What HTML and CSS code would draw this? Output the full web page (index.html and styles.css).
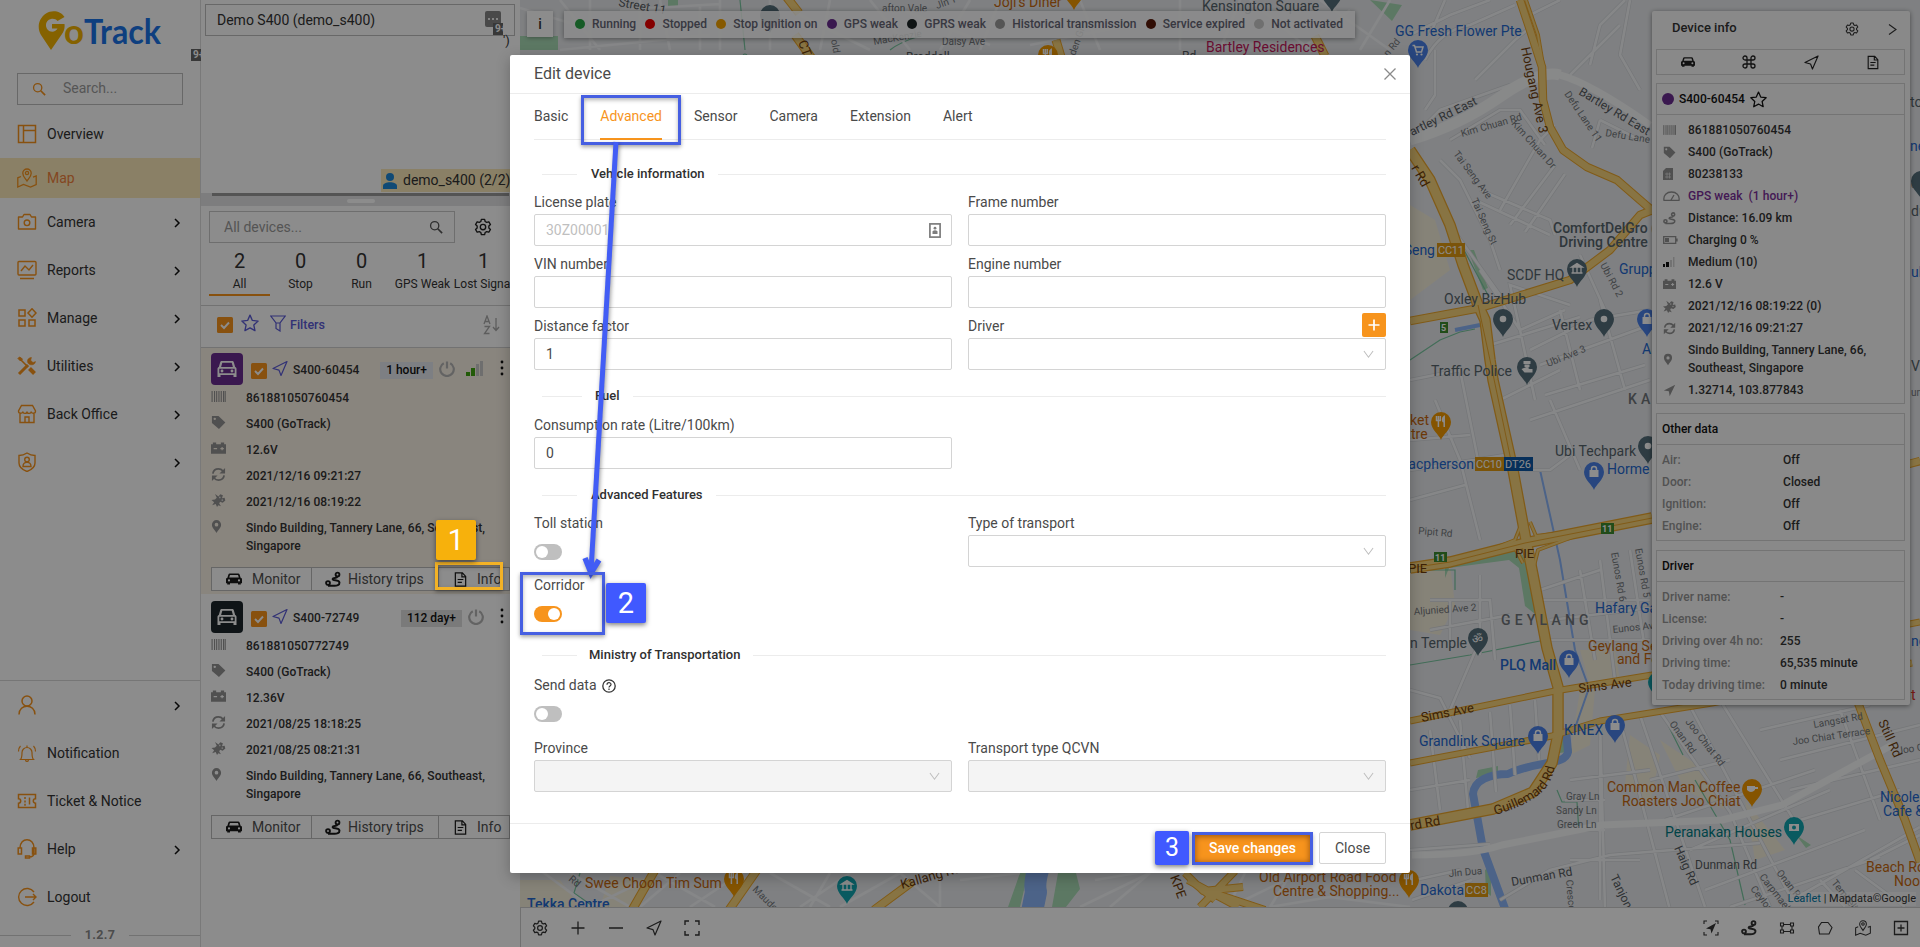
FILE: index.html
```html
<!DOCTYPE html>
<html lang="en">
<head>
<meta charset="utf-8">
<title>GoTrack</title>
<link rel="stylesheet" href="styles.css">
</head>
<body>
<svg width="0" height="0" class="defs" aria-hidden="true">
  <defs>
    <symbol id="chev" viewBox="0 0 12 12"><path d="M4 2 8 6 4 10" fill="none" stroke="currentColor" stroke-width="1.500"/></symbol>
    <symbol id="down" viewBox="0 0 12 12"><path d="M1 2.200 6 9 11 2.200" fill="none" stroke="currentColor" stroke-width="1.100"/></symbol>
    <symbol id="gear" viewBox="0 0 20 20"><g fill="none" stroke="currentColor" stroke-width="1.500" stroke-linejoin="round"><path d="M8.200 1.500h3.600l.6 2.400 1.700 1 2.400-.7 1.800 3.100-1.800 1.700v2l1.800 1.700-1.800 3.100-2.400-.7-1.700 1-.6 2.400H8.200l-.6-2.400-1.700-1-2.400.7-1.800-3.100L3.500 11V9L1.700 7.300l1.800-3.100 2.400.7 1.700-1z"/><circle cx="10" cy="10" r="3"/></g></symbol>
    <symbol id="nav" viewBox="0 0 16 16"><path d="M15 1 1 8l6 1.600L9 15z" fill="none" stroke="currentColor" stroke-width="1.200" stroke-linejoin="round"/></symbol>
    <symbol id="navfill" viewBox="0 0 16 16"><path d="M15 1 1 8l6.200 1L8.200 15z" fill="currentColor"/></symbol>
    <symbol id="car" viewBox="0 0 16 16"><path fill="currentColor" fill-rule="evenodd" d="M3.800 2.500h8.400c.7 0 1.200.4 1.400 1l1 3.300c.9.2 1.400.8 1.400 1.600v3.800h-1.200v1.300H12v-1.300H4v1.300H1.200v-1.300H0V8.400c0-.8.5-1.400 1.400-1.600l1-3.300c.2-.6.700-1 1.400-1zM4 4 3.200 6.600h9.600L12 4zM3 8.300a1.100 1.100 0 1 0 0 2.200 1.100 1.100 0 0 0 0-2.200zm10 0a1.100 1.100 0 1 0 0 2.200 1.100 1.100 0 0 0 0-2.200z"/></symbol>
    <symbol id="carline" viewBox="0 0 20 20"><path fill="currentColor" fill-rule="evenodd" d="M4.800 2h10.400c.8 0 1.400.5 1.600 1.200L18.200 8c.8.3 1.300 1 1.300 1.800V18h-3v-2h-13v2h-3V9.800c0-.8.5-1.500 1.300-1.800l1.400-4.800C3.400 2.500 4 2 4.800 2zm.5 1.800L4.100 8h11.800l-1.200-4.200zM2.300 9.800v4.400h15.400V9.800zM5 10.500a1.400 1.400 0 1 1 0 2.900 1.400 1.400 0 0 1 0-2.900zm10 0a1.400 1.400 0 1 1 0 2.900 1.400 1.400 0 0 1 0-2.900z"/></symbol>
    <symbol id="route" viewBox="0 0 16 16"><g fill="none" stroke="currentColor" stroke-width="1.900"><circle cx="3" cy="11.500" r="1.900"/><circle cx="12.500" cy="3" r="1.900"/><path d="M12.500 5C12 7.500 8 5.500 7.600 7.500 7.300 9.500 14 8 14.500 11c.3 2.500-3 3.200-5 3.200H3"/></g></symbol>
    <symbol id="doc" viewBox="0 0 16 16"><path d="M2.500 1h7.500l3.500 3.700V15h-11zM9.500 1v4.200h4M5 8h6M5 11h4.500" fill="none" stroke="currentColor" stroke-width="1.300"/></symbol>
    <symbol id="star" viewBox="0 0 16 16"><path d="m8 1 2.100 4.700 5.100.6-3.800 3.500 1 5L8 12.300l-4.500 2.500 1-5L.8 6.300l5.100-.6z" fill="none" stroke="currentColor" stroke-width="1.200" stroke-linejoin="round"/></symbol>
    <symbol id="check" viewBox="0 0 16 16"><rect width="16" height="16" rx="1.500" fill="#f7941d"/><path d="m4 8 3 3 5-5.500" fill="none" stroke="#fff" stroke-width="1.900"/></symbol>
    <symbol id="barcode" viewBox="0 0 16 12"><path d="M1 0v12M3.700 0v12M6 0v12M8.500 0v12M11 0v12M13.500 0v12M15.300 0v12" stroke="currentColor" stroke-width="1.200"/></symbol>
    <symbol id="tag" viewBox="0 0 16 16"><path fill="currentColor" fill-rule="evenodd" d="M1 1h7l7.300 7-6.800 7L1 8.500zm3 1.800a1.300 1.300 0 1 0 0 2.600 1.300 1.300 0 0 0 0-2.600z"/></symbol>
    <symbol id="batt" viewBox="0 0 16 12"><path fill="currentColor" fill-rule="evenodd" d="M2 0h3.500v2h5V0H14v2h2v10H0V2h2zm.8 6v1.300h3.700V6zm8.400-1.200V6H10v1.300h1.200v1.200h1.300V7.300h1.200V6h-1.200V4.800z"/></symbol>
    <symbol id="sync" viewBox="0 0 16 16"><path d="M2 7c.5-3 3-5 6-5 2 0 3.600.9 4.800 2.300M14 9c-.5 3-3 5-6 5-2 0-3.600-.9-4.800-2.300" fill="none" stroke="currentColor" stroke-width="1.900"/><path d="M15 1v6H9zM1 15V9h6z" fill="currentColor"/></symbol>
    <symbol id="sat" viewBox="0 0 16 16"><path fill="currentColor" d="m4 1 4 3 2-2.500 3 1L12 6l3-.5.8 3-3 2.500-3-1-1 2 2 3-3-1-1.500 2-1.500-3.500-4 1.500L3 10.500 0 8l4-.500 2-2z"/><circle cx="9.500" cy="5" r="1" fill="#ddd"/><circle cx="12.300" cy="8" r="1" fill="#ddd"/></symbol>
    <symbol id="place" viewBox="0 0 12 16"><path fill="currentColor" fill-rule="evenodd" d="M6 1a5 5 0 0 1 5 5c0 3.500-3.500 6-5 9C4.500 12 1 9.500 1 6a5 5 0 0 1 5-5zm0 3a2 2 0 1 0 0 4 2 2 0 0 0 0-4z"/></symbol>
    <symbol id="power" viewBox="0 0 16 16"><path d="M4.800 2.200a6.800 6.800 0 1 0 6.400 0M8 .5v7" fill="none" stroke="currentColor" stroke-width="2.200"/></symbol>
    <symbol id="mapicon" viewBox="0 0 20 20"><g fill="none" stroke="currentColor" stroke-width="1.300"><path d="M10 13C8.500 10.500 5.800 8.500 5.800 5.200a4.200 4.200 0 0 1 8.400 0C14.200 8.500 11.500 10.500 10 13z"/><circle cx="10" cy="5" r="1.600"/><path d="M4 8.500 .8 9.800V19l5.700-2.500 7 2.500 5.700-2.500V8l-3.200 1.200"/></g></symbol>
    <symbol id="search" viewBox="0 0 16 16"><g fill="none" stroke="currentColor"><circle cx="6.500" cy="6.500" r="4.700" stroke-width="1.500"/><path d="m10 10 5 5" stroke-width="1.900"/></g></symbol>
    <symbol id="pin" viewBox="-10 -28 20 28" overflow="visible"><path d="M0 0C-1.500-5-10-10.500-10-18A10 10 0 0 1 10-18C10-10.500 1.500-5 0 0z" fill="currentColor"/></symbol>
    <symbol id="g-dot" viewBox="-10 -28 20 28"><circle cy="-18" r="3.300" fill="#fff"/></symbol>
    <symbol id="g-bag" viewBox="-10 -28 20 28"><rect x="-4.500" y="-20" width="9" height="7" fill="#fff"/><path d="M-2.500-19v-2a2.500 2.500 0 0 1 5 0v2" fill="none" stroke="#fff" stroke-width="1.500"/></symbol>
    <symbol id="g-food" viewBox="-10 -28 20 28"><path d="M-4.500-24v4.500h3.800V-24M-2.600-24v11M3.200-13v-10.500c-2 1-2.300 5.500 0 5.500" fill="none" stroke="#fff" stroke-width="1.500"/></symbol>
    <symbol id="g-bank" viewBox="-10 -28 20 28"><path d="M-5.500-20 0-23.500 5.500-20zM-4-19.500v5M0-19.500v5M4-19.500v5M-5.500-14h11" fill="#fff" stroke="#fff" stroke-width="1.300"/></symbol>
    <symbol id="g-badge" viewBox="-10 -28 20 28"><path d="M-3.500-24h7v3h-7zM-2.500-20.500h5v2.500q-2.500 2-5 0zM-5.500-16q5.500-2.500 8 0l3 0v3.500h-8z" fill="#fff"/></symbol>
    <symbol id="g-cart" viewBox="-10 -28 20 28"><path d="M-5.500-22.500h2l2 6.500h5l1.500-5h-8" fill="none" stroke="#fff" stroke-width="1.500"/><circle cx="-1" cy="-13.500" r="1.100" fill="#fff"/><circle cx="3.500" cy="-13.500" r="1.100" fill="#fff"/></symbol>
  </defs>
</svg>

<div class="app">
  <aside class="side">
    <svg class="logo" viewBox="0 0 130 44" width="130" height="44">
      <path d="M26.500 7C23 1 14-.5 8 3.500 0 9-1 18 3 25l10 15 11-16c2-3 3-6 2.500-10H14v4.500h5.500c-1.500 3.500-7 4.500-10 1-3-4-1.500-9.500 3.500-10.500 2.500-.5 5 0 6.500 2z" fill="#f3b300"/>
      <text x="26" y="34" class="logo-o" textLength="20" lengthAdjust="spacingAndGlyphs">o</text>
      <text x="46" y="34" class="logo-t" textLength="77" lengthAdjust="spacingAndGlyphs">Track</text>
    </svg>
    <span class="nine side-nine">9+</span>
    <div class="search"><svg width="14" height="14"><use href="#search"/></svg><span>Search...</span></div>
    <nav class="menu">
      <a class="mi"><svg class="ic" viewBox="0 0 20 20"><path d="M1.500 1.500h17v17h-17zM6.500 1.500v17M6.500 6.500h12" fill="none" stroke="currentColor" stroke-width="1.500"/></svg>Overview</a>
      <a class="mi active"><svg class="ic"><use href="#mapicon"/></svg>Map</a>
      <a class="mi"><svg class="ic" viewBox="0 0 20 20"><g fill="none" stroke="currentColor" stroke-width="1.400"><path d="M1.500 5h4L7 2.500h6L14.500 5h4v12h-17z" stroke-linejoin="round"/><circle cx="10" cy="10.800" r="2.800"/></g></svg>Camera<svg class="chev"><use href="#chev"/></svg></a>
      <a class="mi"><svg class="ic" viewBox="0 0 20 20"><g fill="none" stroke="currentColor" stroke-width="1.400"><rect x="1" y="1.500" width="18" height="13.500" rx="1"/><path d="M4 11 8 6l4 4 4-5M3 18.500h14"/></g></svg>Reports<svg class="chev"><use href="#chev"/></svg></a>
      <a class="mi"><svg class="ic" viewBox="0 0 20 20"><g fill="none" stroke="currentColor" stroke-width="1.500"><rect x="2" y="2" width="6" height="6"/><rect x="2" y="12" width="6" height="6"/><rect x="12" y="12" width="6" height="6"/><path d="m15 .8 4 4.200-4 4.200L11 5z"/></g></svg>Manage<svg class="chev"><use href="#chev"/></svg></a>
      <a class="mi"><svg class="ic" viewBox="0 0 20 20"><g fill="none" stroke="currentColor"><path d="m2 18 9-9" stroke-width="3"/><path d="m2 2 9 9" stroke-width="1.600"/><path d="m12.500 12.500 5 5" stroke-width="4"/><path d="M18.500 5.500 16 6.500l-2.300-2.200.8-2.800c-3 0-4.700 2.500-3.800 5 1.500 3.500 7.500 3 7.800-1z" fill="currentColor" stroke-width=".5"/><path d="M1 2.500 2.500 1l3 2-2 2z" fill="currentColor"/></g></svg>Utilities<svg class="chev"><use href="#chev"/></svg></a>
      <a class="mi"><svg class="ic" viewBox="0 0 20 20"><g fill="none" stroke="currentColor" stroke-width="1.400"><path d="M4.500 1.500h11L18.500 7c0 3-4 3-4.300.5C14 10 10 10 10 7.500 10 10 6 10 5.800 7.500 5.500 10 1.500 10 1.500 7zM3 10v8.500h14V10M8 18v-5h4v5"/></g></svg>Back Office<svg class="chev"><use href="#chev"/></svg></a>
      <a class="mi"><svg class="ic" viewBox="0 0 20 20"><g fill="none" stroke="currentColor" stroke-width="1.400"><path d="M10 1c3 2 5.500 2.500 8 2.500V11c0 4-4 7-8 8.500C6 18 2 15 2 11V3.500C4.500 3.500 7 3 10 1z"/><circle cx="10" cy="7.500" r="2.300"/><path d="M6 14.500c0-5.500 8-5.500 8 0z"/></g></svg><svg class="chev"><use href="#chev"/></svg></a>
    </nav>
    <nav class="menu foot">
      <a class="mi"><svg class="ic" viewBox="0 0 20 20"><g fill="none" stroke="currentColor" stroke-width="1.500"><circle cx="10" cy="6" r="5"/><path d="M2 19.500c0-11 16-11 16 0"/></g></svg><svg class="chev"><use href="#chev"/></svg></a>
      <a class="mi"><svg class="ic" viewBox="0 0 20 20"><g fill="none" stroke="currentColor" stroke-width="1.200"><path d="M3.500 16.500c1.500-1.500 1.500-3 1.500-7a5 5 0 0 1 10 0c0 4 0 5.500 1.500 7zM10 4.500v-2M8.500 17c.5 2 2.500 2 3 0M3.500 3C2 4.500 1.500 6 1.500 8.500M16.500 3c1.500 1.500 2 3 2 5.500"/></g></svg>Notification</a>
      <a class="mi"><svg class="ic" viewBox="0 0 20 20"><g fill="none" stroke="currentColor" stroke-width="1.500"><path d="M1.500 3.500h17v4.300a2.200 2.200 0 0 0 0 4.400v4.300h-17v-4.300a2.200 2.200 0 0 0 0-4.400z"/><path d="M8 6v9" stroke-dasharray="2 1.400"/><path d="M12.500 6.500v7"/></g></svg>Ticket &amp; Notice</a>
      <a class="mi"><svg class="ic" viewBox="0 0 20 20"><g fill="none" stroke="currentColor" stroke-width="1.500"><path d="M3 9c0-11 14-11 14 0v5c0 2.500-2 4-5 4M1.200 9H4.500v6H1.200zM15.500 9h3.300v6h-3.300zM8.500 17h4v2h-4z"/></g></svg>Help<svg class="chev"><use href="#chev"/></svg></a>
      <a class="mi"><svg class="ic" viewBox="0 0 20 20"><path d="M17 5a8.500 8.500 0 1 0 0 10M8 10h11M16 7l3 3-3 3" fill="none" stroke="currentColor" stroke-width="1.400"/></svg>Logout</a>
    </nav>
    <div class="ver"><i></i><b>1.2.7</b><i></i></div>
  </aside>

  <section class="panel">
    <div class="tree">
      <div class="sel"><span>Demo S400 (demo_s400)</span><svg width="16" height="16" viewBox="0 0 16 16"><path d="M2 0h12a2 2 0 0 1 2 2v12a2 2 0 0 1-2 2H2a2 2 0 0 1-2-2V2a2 2 0 0 1 2-2z" fill="#858585"/><path d="M3 8h2M7 8h2M11 8h2" stroke="#eee" stroke-width="2"/></svg></div>
      <span class="nine sel-nine">9+</span>
      <span class="clip">')</span>
      <div class="node"><svg width="14" height="16" viewBox="0 0 14 16"><circle cx="7" cy="4" r="4" fill="#1e87d6"/><path d="M0 16v-3c0-5 14-5 14 0v3z" fill="#1e87d6"/></svg>demo_s400 (2/2)</div>
    </div>
    <div class="split"><i></i><b></b></div>
    <div class="find"><div class="box"><span>All devices...</span><svg width="14" height="14"><use href="#search"/></svg></div><svg class="g" width="18" height="18"><use href="#gear"/></svg></div>
    <div class="stats">
      <div class="on"><b>2</b><span>All</span></div><div><b>0</b><span>Stop</span></div><div><b>0</b><span>Run</span></div><div><b>1</b><span>GPS Weak</span></div><div><b>1</b><span>Lost Signal</span></div>
    </div>
    <div class="filters"><svg width="16" height="16"><use href="#check"/></svg><svg class="st" width="18" height="18"><use href="#star"/></svg><svg class="fu" width="16" height="17" viewBox="0 0 16 17"><path d="M.8 1h14.400L10 8v8l-4-2.500V8zM6 8h4" fill="none" stroke="currentColor" stroke-width="1.200"/></svg><b>Filters</b><svg class="az" width="18" height="20" viewBox="0 0 18 20"><path d="M1 9 4 1l3 8M2 6.500h4M1.500 11.500h5L1.500 18.500h5M13 3v12M10 12l3 3.500 3-3.500" fill="none" stroke="currentColor" stroke-width="1.300"/></svg></div>

    <article class="dev warm">
      <header><span class="cb purple"><svg width="20" height="20"><use href="#carline"/></svg></span><svg class="ck" width="16" height="16"><use href="#check"/></svg><svg class="nv" width="16" height="17"><use href="#nav"/></svg><b>S400-60454</b><em class="age blue">1 hour+</em><svg class="pw" width="16" height="16"><use href="#power"/></svg><svg class="sig" width="18" height="15" viewBox="0 0 18 15"><path d="M0 11h4v4H0zM5 7h4v8H5z" fill="#3fa510"/><path d="M10 3h3v12h-3zM14 0h3v15h-3z" fill="#c8c8c8"/></svg><svg class="dots" width="4" height="16" viewBox="0 0 4 16"><circle cx="2" cy="2" r="1.400"/><circle cx="2" cy="8" r="1.400"/><circle cx="2" cy="14" r="1.400"/></svg></header>
      <ul>
        <li><svg width="15" height="11"><use href="#barcode"/></svg>861881050760454</li>
        <li><svg width="15" height="15"><use href="#tag"/></svg>S400 (GoTrack)</li>
        <li><svg width="15" height="12"><use href="#batt"/></svg>12.6V</li>
        <li><svg width="15" height="15"><use href="#sync"/></svg>2021/12/16 09:21:27</li>
        <li><svg width="15" height="14"><use href="#sat"/></svg>2021/12/16 08:19:22</li>
        <li class="ad"><svg width="11" height="15"><use href="#place"/></svg>Sindo Building, Tannery Lane, 66, Southeast, Singapore</li>
      </ul>
      <footer><span><svg width="16" height="16"><use href="#car"/></svg>Monitor</span><span><svg width="16" height="17"><use href="#route"/></svg>History trips</span><span><svg width="15" height="17"><use href="#doc"/></svg>Info</span></footer>
    </article>
    <article class="dev">
      <header><span class="cb dark"><svg width="20" height="20"><use href="#carline"/></svg></span><svg class="ck" width="16" height="16"><use href="#check"/></svg><svg class="nv" width="16" height="17"><use href="#nav"/></svg><b>S400-72749</b><em class="age">112 day+</em><svg class="pw last" width="16" height="16"><use href="#power"/></svg><svg class="dots" width="4" height="16" viewBox="0 0 4 16"><circle cx="2" cy="2" r="1.400"/><circle cx="2" cy="8" r="1.400"/><circle cx="2" cy="14" r="1.400"/></svg></header>
      <ul>
        <li><svg width="15" height="11"><use href="#barcode"/></svg>861881050772749</li>
        <li><svg width="15" height="15"><use href="#tag"/></svg>S400 (GoTrack)</li>
        <li><svg width="15" height="12"><use href="#batt"/></svg>12.36V</li>
        <li><svg width="15" height="15"><use href="#sync"/></svg>2021/08/25 18:18:25</li>
        <li><svg width="15" height="14"><use href="#sat"/></svg>2021/08/25 08:21:31</li>
        <li class="ad"><svg width="11" height="15"><use href="#place"/></svg>Sindo Building, Tannery Lane, 66, Southeast, Singapore</li>
      </ul>
      <footer><span><svg width="16" height="16"><use href="#car"/></svg>Monitor</span><span><svg width="16" height="17"><use href="#route"/></svg>History trips</span><span><svg width="15" height="17"><use href="#doc"/></svg>Info</span></footer>
    </article>
  </section>

  <main class="main">
    <svg class="map" viewBox="520 0 1400 907" width="1400" height="907">
      <rect x="520" width="1400" height="907" fill="#e8eaed"/>
      <g fill="#f5eedb"><path d="M1410 205l25 15 15 50-40 30zM1425 565h25l5 40-15 30-30-5v-60zM1580 650l35 0 5 30-30 5zM1630 735l30 20-10 50-25-20zM1660 740l45 30 20 40-40-20zM1580 690l15 0-5 55-20 10zM1745 800l40 50-30 10zM520 880l40 0 20 27h-60zM610 876l40 3-20 28h-30z"/></g>
      <g fill="#a8dab5"><path d="M520 36h38v14h-38zM668 0h10v7h-10zM1370 0l32 5-10 16zM1445 560l70-9 8 4 6 14 6 45-10-8-6-38-10-8-60 8-4 10zM1560 736l6-5 6 20-12 2zM1478 770l20-4v8l-22 4zM1468 250l6 0 14 38-5 2zM1485 870l6-4v30l-5-4zM1028 873h-8l-12 34h12zM1058 873h18l4 16-14 18h-14zM1796 835l15 10-5 3z"/></g>
      <g fill="none" stroke="#8ab4f8" stroke-linejoin="round"><path d="M1566 730l2 22c-3 14-30 8-60 22-18 0-34 6-35 20l10 55 24 65" stroke-width="8"/><path d="M1540 470l20 90 15 90 14 38-14 40" stroke-width="2"/><path d="M1455 330l25-5" stroke-width="4"/><path d="M1038 870q-4 14-2 22l-4 20" stroke-width="22"/></g>
      <g fill="none" stroke="#79c6a0" stroke-width="1.200"><path d="M1410 360l30-20 20-8 15-3M1430 172l35 80 24 45M1410 665l60-10 70-14M740 0l5 50M747 55q-5-4-5 8M1557 790l5 12 15 0 2 30M1695 780l35 60 15 65M1663 715l20 40M580 873l-6 20 20 14M890 50q10-8 30-14M1425 570h30v20"/></g>
      <g fill="none" stroke="#d4d7db" stroke-width="4"><path id="mr" d="M1410 35l40-20 40-15M1445 0l-15 35M1425 60q15-30 45-35l45-20M1435 50v45l-10 15M1410 140l30-30 70-25M1475 80l40-40 12-10M1590 65l10-40 25-25M1570 75l50-50M1640 90l-20-35 10-55M1560 0l-30 15M1450 140l50-30 20 0 25 35M1440 160l20 20 30 60 10 30M1500 210l40-70 15-15M1510 225l45-60M1525 232l40-58M1480 190l70 30 5 15M1475 200l75 35M1600 120l-8 28M1600 120l40 20M1450 225l50 70M1480 270l40 60 45-20M1520 330l-10-45 60 20M1520 330l15 70M1530 350l60-30 60-10M1545 395l100-30M1540 365l110-40M1560 310l20 80M1600 300l25 90M1580 255l25 55M1500 400l60-30M1490 345l90-28M1550 400l30 70M1530 420l120-40M1410 380l50-10 20 100M1410 440l60-5M1410 470l95-15M1410 500l55-15M1480 540l-20-80-25-60M1525 470h25l20-15M1540 600h110M1550 640h100M1600 560l15 120M1630 550l15 100M1580 570l15 90M1550 620l100-12M1540 590l60-20M1430 630l80-15M1430 600h60l5 60M1480 575v80M1450 600v40M1410 690l30 8 30 60M1480 640l-30 70M1430 730l10 80M1460 720l8 90M1490 712l6 80M1510 705l5 70M1535 700l4 60M1410 790l60-10M1410 850l80-6M1570 780l80-10M1565 800h40M1570 830h35M1570 860h70M1600 740v160M1600 720l5 190M1620 720l50 190M1640 715l65 192M1660 712l70 100 40 95M1690 706l100 190M1720 700l80 130M1650 780l80-20M1665 820l150-50M1690 850l140-60M1705 890l160-60M1730 907l150-50M1780 907l140-80M1780 760l140-35M1760 730l110-25M1790 790l130-30M1800 820l100-30M1840 710l40 110M1870 860l50-25M1500 900l50-30 60-15 150-12M1412 900l60-20M1415 880l45-10M1855 870l50 37M1820 880l25 27"/></g>
      <g fill="none" stroke="#f5f6f8" stroke-width="2.600"><use href="#mr"/>
      <path d="M520 8l50 15M560 0l40 50M590 0v50M620 10l100-6M640 0v50M660 0l10 50M700 5v45M720 0v50M560 50l150-15M770 0v50M790 10l80 40M830 0l-10 50M870 0l40 50M890 5l100 40M940 50l30-50M1000 0l-20 50M1030 45l100-20M1080 0l20 50M1180 0v50M1220 50l20-50M1300 50l50-40M1320 0l70 50M1390 0l-30 50M1250 0l60 50"/>
      <path d="M540 870l50 37M570 873l60 34M590 907l70-34M640 907l40-34M655 873l60 34M690 907l60-40M770 873l60 34M800 907l50-34M830 873l-20 34M840 907l60-34M900 873l40 34M940 870v37M960 880l60-7M1080 907l70-34M1095 880l60-10M1150 873l-40 34M1230 907l70-34M1270 907l60-10 80 10M1245 873l-15 30M1290 875l-20 32"/></g>
      <g fill="none" stroke="#f8f9fa" stroke-width="11" stroke-linejoin="round"><path d="M1410 140q60-20 90-43t60-22q30 8 90 50M1412 855q60 0 90-10l40-8 60-12 120-5 60-15 110-60" stroke-width="7"/><path d="M1410 140q50-15 90-43t60-22"/></g>
      <g fill="none" stroke="#eba62c" stroke-linejoin="round">
        <path d="M1520 0l10 30 12 37 1 33 7 27 13 23 24 17 30 13 23 20 14 12" stroke-width="8.500"/>
        <path d="M1526 0l12 35 5 30" stroke-width="4"/>
        <path d="M1410 150l20 30 20 45 13 40 15 40 7 15 5 40 3 20 20 90 12 65 8 40 14 73 11 39v47l-6 29-19 29-40 17-83 16" stroke-width="11.500"/>
        <path d="M1410 321l70-13 90-28 40-30 30-35 20-8" stroke-width="8.500"/>
        <path d="M1410 568l40-6 75-19 127-25" stroke-width="11.500"/>
        <path d="M1460 562l55-22 6-15M1530 522l6 14 50-6M1515 548l8 15M1533 570l5-20 40-15" stroke-width="4"/>
        <path d="M1410 721l145-30 97-16 268-53M1410 763l142-27 48-15 112-18 200-40" stroke-width="7"/>
        <path d="M1855 695l25 65 25 60 15 42M1905 465l15-4" stroke-width="8.500"/>
        <path d="M655 870l-23 40M757 870l-28 40M912 882l-38 28M785-5l14 18M1056 40l6 20M1315 36l10 20M795 35l18 25" stroke-width="9"/>
        <path d="M1185 873l18 18 40-4M1200 907l35-36M1188 880l50 27M1205 890l60 20M1215 900l-25-20" stroke-width="8"/>
      </g>
      <g fill="none" stroke="#f7d37a" stroke-linejoin="round">
        <path d="M1520 0l10 30 12 37 1 33 7 27 13 23 24 17 30 13 23 20 14 12" stroke-width="6.500"/>
        <path d="M1526 0l12 35 5 30" stroke-width="2"/>
        <path d="M1410 150l20 30 20 45 13 40 15 40 7 15 5 40 3 20 20 90 12 65 8 40 14 73 11 39v47l-6 29-19 29-40 17-83 16" stroke-width="9"/>
        <path d="M1410 321l70-13 90-28 40-30 30-35 20-8" stroke-width="6.500"/>
        <path d="M1410 568l40-6 75-19 127-25" stroke-width="9"/>
        <path d="M1460 562l55-22 6-15M1530 522l6 14 50-6M1515 548l8 15M1533 570l5-20 40-15" stroke-width="2"/>
        <path d="M1410 721l145-30 97-16 268-53M1410 763l142-27 48-15 112-18 200-40" stroke-width="5"/>
        <path d="M1855 695l25 65 25 60 15 42M1905 465l15-4" stroke-width="6.500"/>
        <path d="M655 870l-23 40M757 870l-28 40M912 882l-38 28M785-5l14 18M1056 40l6 20M1315 36l10 20M795 35l18 25" stroke-width="7"/>
        <path d="M1185 873l18 18 40-4M1200 907l35-36M1188 880l50 27M1205 890l60 20M1215 900l-25-20" stroke-width="6"/>
      </g>
      <path d="M1410 568l40-6 75-19 127-25M1478 305l12 55 23 110" fill="none" stroke="#eba62c" stroke-width="1"/>

      <path id="guil" d="M1494 778M1495 815Q1530 805 1544 790T1556 740" fill="none"/>
      <g class="road">
        <text transform="translate(1521 48) rotate(78)">Hougang Ave 3</text>
        <text transform="translate(1411 168) rotate(60)">r Rd</text>
        <text x="1515" y="558">PIE</text><text x="1408" y="573">PIE</text>
        <text transform="translate(1422 722) rotate(-11)">Sims Ave</text><text transform="translate(1579 693) rotate(-7)">Sims Ave</text>
        <text><textPath href="#guil">Guillemard Rd</textPath></text>
        <text transform="translate(1411 830) rotate(-10)">rd Rd</text>
        <text transform="translate(1878 722) rotate(66)">Still Rd</text>
        <text transform="translate(902 889) rotate(-16)">Kallang Rd</text><text transform="translate(1170 877) rotate(70)">KPE</text><text transform="translate(798 42) rotate(70)">CT</text>
      </g>
      <g class="rd2">
        <text transform="translate(1412 136) rotate(-26)">artley Rd East</text><text transform="translate(1578 94) rotate(31)">Bartley Rd East</text>
        <text transform="translate(1512 886) rotate(-10)">Dunman Rd</text><text x="1695" y="869">Dunman Rd</text>
        <text transform="translate(1674 848) rotate(66)">Haig Rd</text><text transform="translate(1610 877) rotate(64)">Tanjong</text>
        <text transform="translate(618 6) rotate(10)">Street 11</text><text x="906" y="61">Braddell</text><text x="1182" y="60">Rd</text>
      </g>
      <g class="rd3">
        <text transform="translate(1462 137) rotate(-16)">Kim Chuan Rd</text><text transform="translate(1511 124) rotate(48)">Kim Chuan Dr</text>
        <text transform="translate(1564 94) rotate(56)">Defu Lane 11</text><text transform="translate(1605 136) rotate(9)">Defu Lane 12</text>
        <text transform="translate(1453 154) rotate(53)">Tai Seng Ave</text><text transform="translate(1471 200) rotate(66)">Tai Seng St</text>
        <text transform="translate(1600 265) rotate(62)">Ubi Rd 2</text><text transform="translate(1548 367) rotate(-22)">Ubi Ave 3</text>
        <text transform="translate(1418 534) rotate(5)">Pipit Rd</text><text transform="translate(1414 615) rotate(-4)">Aljunied Ave 2</text>
        <text transform="translate(1611 553) rotate(80)">Eunos Rd 6</text><text transform="translate(1635 549) rotate(80)">Eunos Rd 5</text><text transform="translate(1613 633) rotate(-6)">Eunos Ave 5</text>
        <text transform="translate(1669 724) rotate(54)">Onan Rd</text><text transform="translate(1685 722) rotate(52)">Joo Chiat Rd</text>
        <text transform="translate(1814 728) rotate(-10)">Langsat Rd</text><text transform="translate(1793 745) rotate(-8)">Joo Chiat Terrace</text><text transform="translate(1898 754) rotate(-8)">Joo Chiat</text>
        <text x="1566" y="800">Gray Ln</text><text x="1556" y="814">Sandy Ln</text><text x="1557" y="828">Green Ln</text>
        <text transform="translate(1449 877) rotate(-5)">Jln Dua</text><text transform="translate(1566 880) rotate(85)">Crescent</text>
        <text transform="translate(1759 877) rotate(52)">Carpmael Rd</text><text transform="translate(1776 873) rotate(52)">Onan Rd</text><text transform="translate(1750 889) rotate(52)">Ceylon Rd</text><text transform="translate(1831 883) rotate(52)">Tembeling</text>
        <text transform="translate(874 45) rotate(-10)">MacKenzie</text><text x="942" y="45">Daisy Ave</text><text transform="translate(1075 56) rotate(-70)">den Gr</text><text transform="translate(831 40) rotate(80)">old D</text><text x="882" y="12">afton Vale</text><text transform="translate(937 9) rotate(-20)">Jln T</text><text transform="translate(752 890) rotate(45)">Maude Rd</text><text transform="translate(568 880) rotate(40)">Rd</text><text transform="translate(1388 57) rotate(-50)">n Rd</text><text x="1911" y="396">un</text><text x="1911" y="188">d</text>
      </g>
      <g class="poi gray">
        <text x="1507" y="280">SCDF HQ</text><text x="1444" y="304">Oxley BizHub</text><text x="1552" y="330">Vertex</text><text x="1431" y="376">Traffic Police</text><text x="1555" y="456">Ubi Techpark</text><text x="1410" y="648">n Temple</text>
        <g class="bold"><text x="1553" y="233">ComfortDelGro (</text><text x="1559" y="247">Driving Centre</text></g>
        <text x="1202" y="11">Kensington Square</text><text x="1910" y="107">to</text><text x="1911" y="216">du</text><text x="1911" y="371">V</text>
        <g class="area"><text x="1628" y="404">KA</text><text x="1501" y="625">GEYLANG</text></g>
      </g>
      <g class="poi blue">
        <text x="1395" y="36">GG Fresh Flower Pte</text><text x="1435" y="255" text-anchor="end">Seng</text><text x="1619" y="274">Grupp</text><text x="1607" y="474">Horme</text><text x="1474" y="469" text-anchor="end">Macpherson</text><text x="1595" y="613">Hafary Ga</text><text x="1564" y="735">KINEX</text><text x="1419" y="746">Grandlink Square</text><text x="1464" y="895" text-anchor="end">Dakota</text><text x="1880" y="802">Nicole's</text><text x="1883" y="816">Cafe &amp; </text><text x="1642" y="354">A</text><text x="1910" y="151">ne</text><text x="1911" y="277">uk</text><text x="1911" y="646">ng</text>
        <g class="bold"><text x="1500" y="670">PLQ Mall</text><text x="527" y="909">Tekka Centre</text></g>
      </g>
      <g class="poi brown">
        <text x="994" y="7">Joji's Diner</text><text x="1410" y="425">ket</text><text x="1411" y="439">tre</text><text x="1588" y="651">Geylang Se</text><text x="1617" y="664">and Fo</text><text x="1607" y="792">Common Man Coffee</text><text x="1622" y="806">Roasters Joo Chiat</text><text x="585" y="888">Swee Choon Tim Sum</text><text x="1259" y="882">Old Airport Road Food</text><text x="1273" y="896">Centre &amp; Shopping...</text><text x="1866" y="872">Beach Road</text><text x="1894" y="886">Noodle</text>
      </g>
      <g class="poi"><text x="1206" y="52" fill="#c2185b">Bartley Residences</text><text x="1665" y="837" fill="#007b83">Peranakan Houses</text><text x="1911" y="700" fill="#d93025">t</text></g>
      <g class="shield">
        <path d="M1437 243h28v14h-28zM1475 457h29v14h-29zM1465 883h23v14h-23z" fill="#e09a12"/><path d="M1504 457h29v14h-29z" fill="#0b57a4"/><path d="M1440 322h8v11h-8zM1434 552h13v10h-13zM1601 523h13v11h-13z" fill="#3c8b2f"/>
        <text x="1438" y="254" textLength="26">CC11</text><text x="1476" y="468" textLength="26">CC10</text><text x="1505" y="468" textLength="26">DT26</text><text x="1466" y="894" textLength="21">CC8</text>
        <g class="s"><text x="1441" y="331">5</text><text x="1435" y="561">11</text><text x="1602" y="532">11</text></g>
      </g>
      <g color="#546e7a">
        <use href="#pin" x="1567" y="259" width="20" height="28"/><use href="#g-bank" x="1567" y="259" width="20" height="28"/>
        <use href="#pin" x="1493" y="309" width="20" height="28"/><use href="#g-dot" x="1493" y="309" width="20" height="28"/>
        <use href="#pin" x="1594" y="309" width="20" height="28"/><use href="#g-dot" x="1594" y="309" width="20" height="28"/>
        <use href="#pin" x="1517" y="357" width="20" height="28"/><use href="#g-badge" x="1517" y="357" width="20" height="28"/>
        <use href="#pin" x="1638" y="436" width="20" height="28"/><use href="#g-dot" x="1638" y="436" width="20" height="28"/>
        <use href="#pin" x="1468" y="628" width="20" height="28"/><text x="1472" y="643" font-size="12" fill="#fff">ॐ</text>
        <use href="#pin" x="1448" y="901" width="20" height="28"/><use href="#pin" x="760" y="5" width="20" height="28"/><use href="#pin" x="1322" y="-16" width="20" height="28"/><use href="#pin" x="1911" y="171" width="20" height="28"/>
      </g>
      <g color="#4a80e8">
        <use href="#pin" x="1408" y="40" width="20" height="28"/><use href="#g-cart" x="1408" y="40" width="20" height="28"/>
        <use href="#pin" x="1637" y="309" width="20" height="28"/><use href="#g-bag" x="1637" y="309" width="20" height="28"/>
        <use href="#pin" x="1584" y="462" width="20" height="28"/><use href="#g-bag" x="1584" y="462" width="20" height="28"/>
        <use href="#pin" x="1559" y="650" width="20" height="28"/><use href="#g-bag" x="1559" y="650" width="20" height="28"/>
        <use href="#pin" x="1605" y="715" width="20" height="28"/><use href="#g-bag" x="1605" y="715" width="20" height="28"/>
        <use href="#pin" x="1528" y="726" width="20" height="28"/><use href="#g-bag" x="1528" y="726" width="20" height="28"/>
      </g>
      <g color="#f29900">
        <use href="#pin" x="1431" y="412" width="20" height="28"/><use href="#g-food" x="1431" y="412" width="20" height="28"/>
        <use href="#pin" x="1399" y="870" width="20" height="28"/><use href="#g-food" x="1399" y="870" width="20" height="28"/>
        <use href="#pin" x="724" y="869" width="20" height="28"/><use href="#g-food" x="724" y="869" width="20" height="28"/>
        <use href="#pin" x="1742" y="779" width="20" height="28"/><path d="M1747 786h8v4q-4 4-8 0zM1755 787h3v2h-3" fill="#fff"/>
        <use href="#pin" x="1038" y="45" width="20" height="28"/><use href="#g-food" x="1038" y="45" width="20" height="28"/>
        <use href="#pin" x="1064" y="-18" width="20" height="28"/><use href="#g-food" x="1064" y="-18" width="20" height="28"/>
      </g>
      <g color="#12a4af">
        <use href="#pin" x="1784" y="817" width="20" height="28"/><rect x="1789" y="824" width="10" height="7" fill="#fff"/><circle cx="1794" cy="827.500" r="2" fill="#12a4af"/>
        <use href="#pin" x="837" y="876" width="20" height="28"/><use href="#g-bank" x="837" y="876" width="20" height="28"/>
        <use href="#pin" x="1648" y="672" width="20" height="28"/>
      </g>
    </svg>
    <div class="top"><span class="ibox">i</span>
      <div class="legend">
        <span><i class="d1"></i>Running</span><span><i class="d2"></i>Stopped</span><span><i class="d3"></i>Stop ignition on</span><span><i class="d4"></i>GPS weak</span><span><i class="d5"></i>GPRS weak</span><span><i class="d6"></i>Historical transmission</span><span><i class="d7"></i>Service expired</span><span><i class="d8"></i>Not activated</span>
      </div>
    </div>
    <aside class="info">
      <h3>Device info<svg width="14" height="14"><use href="#gear"/></svg><svg class="c" width="13" height="13" viewBox="0 0 13 13"><path d="m3 1.500 7 5-7 5" fill="none" stroke="currentColor" stroke-width="1.100"/></svg></h3>
      <div class="tools"><svg width="14" height="14"><use href="#car"/></svg><svg width="14" height="14" viewBox="0 0 14 14"><path d="M5 5H3a2 2 0 1 1 2-2v8a2 2 0 1 1-2-2h8a2 2 0 1 1-2 2V3a2 2 0 1 1 2 2z" fill="none" stroke="currentColor" stroke-width="1.300"/></svg><svg width="15" height="15"><use href="#nav"/></svg><svg width="14" height="15"><use href="#doc"/></svg></div>
      <div class="card first"><h4><i></i>S400-60454<svg width="17" height="17"><use href="#star"/></svg></h4>
        <ul>
          <li><svg width="13" height="10"><use href="#barcode"/></svg>861881050760454</li>
          <li><svg width="13" height="13"><use href="#tag"/></svg>S400 (GoTrack)</li>
          <li><svg width="10" height="12" viewBox="0 0 10 12"><path d="M3 0h7v12H0V3z" fill="currentColor"/><path d="M2 6h6M2 9h6M4 4.500v6M6.500 4.500v6" stroke="#ddd" stroke-width=".8"/></svg>80238133</li>
          <li class="pur"><svg width="17" height="10" viewBox="0 0 17 10"><path d="M1 9.500C0 4 4 1 8.500 1S17 4 16 9.500zM8 9l3-5" fill="none" stroke="currentColor" stroke-width="1.300"/></svg>GPS weak&nbsp; (1 hour+)</li>
          <li><svg width="13" height="13"><use href="#route"/></svg>Distance: 16.09 km</li>
          <li><svg width="15" height="8" viewBox="0 0 15 8"><path d="M.7.700h12v6.600H.7zM14 2.500v3" fill="none" stroke="currentColor" stroke-width="1.300"/><path d="M2 2h4v4H2z" fill="currentColor"/></svg>Charging 0 %</li>
          <li><svg width="12" height="12" viewBox="0 0 12 12"><path d="M0 8h2v3H0zM3 6h3v5H3z" fill="#111"/><path d="M7 4h2v7H7zM10 1h1.500v10H10z" fill="#d0d0d0"/></svg>Medium (10)</li>
          <li><svg width="13" height="10"><use href="#batt"/></svg>12.6 V</li>
          <li><svg width="13" height="13"><use href="#sat"/></svg>2021/12/16 08:19:22 (0)</li>
          <li><svg width="13" height="13"><use href="#sync"/></svg>2021/12/16 09:21:27</li>
          <li class="two"><svg width="10" height="13"><use href="#place"/></svg>Sindo Building, Tannery Lane, 66, Southeast, Singapore</li>
          <li><svg width="13" height="13"><use href="#navfill"/></svg>1.32714, 103.877843</li>
        </ul></div>
      <div class="card kv"><h4>Other data</h4><dl><dt>Air:</dt><dd>Off</dd><dt>Door:</dt><dd>Closed</dd><dt>Ignition:</dt><dd>Off</dd><dt>Engine:</dt><dd>Off</dd></dl></div>
      <div class="card kv drv"><h4>Driver</h4><dl><dt>Driver name:</dt><dd>-</dd><dt>License:</dt><dd>-</dd><dt>Driving over 4h no:</dt><dd>255</dd><dt>Driving time:</dt><dd>65,535 minute</dd><dt>Today driving time:</dt><dd>0 minute</dd></dl></div>
    </aside>
    <div class="attr"><a>Leaflet</a> | Mapdata©Google</div>
    <div class="bar">
      <svg viewBox="0 0 20 20"><use href="#gear"/></svg>
      <svg viewBox="0 0 16 16"><path d="M8 1.500v13M1.500 8h13" stroke="currentColor" stroke-width="1.300"/></svg>
      <svg viewBox="0 0 16 16"><path d="M1 8h14" stroke="currentColor" stroke-width="1.500"/></svg>
      <svg viewBox="0 0 16 16"><use href="#nav"/></svg>
      <svg viewBox="0 0 16 16"><path d="M1 5V1h4M11 1h4v4M15 11v4h-4M5 15H1v-4" fill="none" stroke="currentColor" stroke-width="1.400"/></svg>
      <span class="sp"></span>
      <svg viewBox="0 0 16 16"><path d="M1 4V1h3M12 1h3v3M15 12v3h-3M4 15H1v-3" fill="none" stroke="currentColor" stroke-width="1.100"/><path d="M13 3 3 8.500l4.500.8 1 4.200z" fill="currentColor"/></svg>
      <svg viewBox="0 0 16 16"><use href="#route"/></svg>
      <svg viewBox="0 0 16 16"><g fill="none" stroke="currentColor" stroke-width="1.100"><path d="M4 4.500h8M4 11.500h8M3 6v4M13 6v4"/><path d="M1.500 3h3v3h-3zM11.500 3h3v3h-3zM1.500 10h3v3h-3zM11.500 10h3v3h-3z"/></g></svg>
      <svg viewBox="0 0 16 16"><path d="M4.500 2.500h6.500l4 5-3 6.500H2.500l-1-7z" fill="none" stroke="currentColor" stroke-width="1.100"/></svg>
      <svg viewBox="0 0 20 20"><use href="#mapicon"/></svg>
      <svg viewBox="0 0 16 16"><path d="M1.500 1.500h13v13h-13zM8 4.500v7M4.500 8h7" fill="none" stroke="currentColor" stroke-width="1.300"/></svg>
    </div>
  </main>
</div>

<div class="mask"></div>

<div class="modal">
  <div class="mhead">Edit device<svg width="12" height="12" viewBox="0 0 12 12"><path d="m.5.5 11 11m0-11-11 11" stroke="#8a8a8a" stroke-width="1.300"/></svg></div>
  <div class="mbody">
    <div class="tabs"><span>Basic</span><span class="cur">Advanced</span><span>Sensor</span><span>Camera</span><span>Extension</span><span>Alert</span></div>
    <h5 class="s1">Vehicle information</h5>
    <div class="grid">
      <div class="f"><label>License plate</label><div class="in ph">30Z00001<svg width="12" height="15" viewBox="0 0 12 15"><rect x=".9" y=".9" width="10.200" height="13.200" fill="none" stroke="#7d7d7d" stroke-width="1.700"/><circle cx="6" cy="5.200" r="1.400" fill="#7d7d7d"/><path d="M3.500 11V8.300q2.500-2 5 0V11z" fill="#7d7d7d"/></svg></div></div>
      <div class="f"><label>Frame number</label><div class="in"></div></div>
      <div class="f"><label>VIN number</label><div class="in"></div></div>
      <div class="f"><label>Engine number</label><div class="in"></div></div>
      <div class="f"><label>Distance factor</label><div class="in">1</div></div>
      <div class="f"><label>Driver<button class="add"><svg width="12" height="12" viewBox="0 0 12 12"><path d="M6 .5v11M.5 6h11" stroke="#fff" stroke-width="1.700"/></svg></button></label><div class="in"><svg width="11" height="11"><use href="#down"/></svg></div></div>
    </div>
    <h5 class="s2">Fuel</h5>
    <div class="grid"><div class="f"><label>Consumption rate (Litre/100km)</label><div class="in">0</div></div></div>
    <h5 class="s3">Advanced Features</h5>
    <div class="grid">
      <div class="f"><label>Toll station</label><i class="sw"></i></div>
      <div class="f"><label>Type of transport</label><div class="in"><svg width="11" height="11"><use href="#down"/></svg></div></div>
      <div class="f"><label>Corridor</label><i class="sw on"></i></div>
    </div>
    <h5 class="s4">Ministry of Transportation</h5>
    <div class="grid g4">
      <div class="f"><label>Send data<svg class="q" width="14" height="14" viewBox="0 0 14 14"><circle cx="7" cy="7" r="6.200" fill="none" stroke="#333" stroke-width="1.300"/><path d="M5 5.700c0-2.700 4-2.500 4-.3C9 7 7 7 7 8.600M7 9.600v1.300" fill="none" stroke="#333" stroke-width="1.200"/></svg></label><i class="sw"></i></div><div class="f"></div>
      <div class="f"><label>Province</label><div class="in dis"><svg width="11" height="11"><use href="#down"/></svg></div></div>
      <div class="f"><label>Transport type QCVN</label><div class="in dis"><svg width="11" height="11"><use href="#down"/></svg></div></div>
    </div>
  </div>
  <div class="mfoot"><button class="save">Save changes</button><button class="close">Close</button></div>
</div>

<div class="mark m-tab"></div>
<svg class="arrow" width="60" height="450" viewBox="570 135 60 450"><path d="M616 142 591 571" stroke-width="5"/><path d="m585 558 6 15 8-13" stroke-width="5.500"/></svg>
<div class="mark m-cor"></div>
<div class="mark m-info"></div>
<div class="num n1">1</div><div class="num n2">2</div><div class="num n3">3</div>
</body>
</html>
```
FILE: styles.css
```css
* { box-sizing: border-box; }
body { margin: 0; width: 1920px; height: 947px; overflow: hidden; font: 14px/1.5 Roboto, "Liberation Sans", sans-serif; color: #333; background: #fff; position: relative; }
ul, dl, dd, h3, h4, h5 { margin: 0; padding: 0; list-style: none; }
svg { flex: none; display: block; }
.defs { position: absolute; }
button { font: inherit; padding: 0; }

.app { display: flex; height: 947px; }

/* sidebar */
.side { position: relative; width: 201px; border-right: 1px solid #dcdcdc; display: flex; flex-direction: column; }
.logo { margin: 10px 0 0 38px; }
.logo-o, .logo-t { font: 700 34px Lato, sans-serif; }
.logo-o { fill: #f3b300; }
.logo-t { fill: #1a73e8; }
.nine { position: absolute; background: #666; color: #fff; font: 700 10px/12px Roboto, sans-serif; width: 10px; height: 12px; overflow: hidden; padding-left: 2px; white-space: nowrap; }
.side-nine { left: 191px; top: 49px; }
.search { margin: 19px 0 0 17px; width: 166px; height: 32px; border: 1px solid #bdbdbd; display: flex; align-items: center; padding-left: 14px; color: #9c9c9c; }
.search svg { color: #f7941d; margin-right: 17px; }
.search span { margin-top: -2px; }
.menu { display: flex; flex-direction: column; gap: 8px; margin-top: 9px; }
.mi { display: flex; align-items: center; height: 40px; padding: 0 17px; }
.mi .ic { width: 20px; height: 20px; color: #f7941d; margin-right: 10px; }
.mi .chev { width: 12px; height: 12px; margin-left: auto; position: relative; top: 1px; color: #111; }
.mi.active { background: #fbe9bb; color: #f0813c; margin: -4px 0 -4px; }
.foot { margin-top: auto; border-top: 1px solid #d8d8d8; padding-top: 4px; }
.ver { display: flex; align-items: center; gap: 14px; height: 21px; margin: 8px 0 1px; color: #8a8a8a; font-size: 12.500px; }
.ver i { flex: 1; height: 1px; background: #d0d0d0; }
.ver b { letter-spacing: .3px; }

/* device list */
.panel { width: 319px; position: relative; }
.tree { position: relative; height: 193px; padding: 4px; }
.sel { width: 310px; height: 32px; border: 1px solid #bdbdbd; display: flex; padding: 6px 13px 0 11px; justify-content: space-between; line-height: 18px; }
.sel-nine { left: 292px; top: 23px; }
.clip { position: absolute; left: 302px; top: 31px; font-size: 13px; }
.node { position: absolute; left: 180px; top: 169px; width: 129px; height: 23px; background: #fbe9bb; display: flex; align-items: center; gap: 6px; padding-left: 2px; white-space: nowrap; }
.split { height: 13px; background: #e3e4e6; display: flex; flex-direction: column; align-items: center; }
.split i { width: 297px; height: 3px; background: #9a9a9a; }
.split b { width: 28px; height: 4px; border-radius: 2px; background: #fff; margin-top: 3px; }
.find { display: flex; align-items: center; margin: 5px 0 0 8px; gap: 19px; }
.box { width: 246px; height: 32px; border: 1px solid #c8c8c8; display: flex; align-items: center; justify-content: space-between; padding: 0 11px 0 14px; color: #9a9a9a; }
.box svg { color: #555; }
.find .g { color: #222; }
.stats { display: flex; margin: 4px 0 0 8px; width: 305px; height: 58px; }
.stats div { width: 61px; display: flex; flex-direction: column; align-items: center; padding-top: 4px; height: 49px; }
.stats .on { border-bottom: 2px solid #f7941d; }
.stats b { font: 400 20px/20px Roboto, sans-serif; }
.stats span { font-size: 12px; line-height: 18px; margin-top: 4px; white-space: nowrap; }
.filters { height: 43px; border: solid #cfcfcf; border-width: 1px 0; display: flex; align-items: center; padding: 0 19px 4px 16px; color: #5b5bd6; font-size: 12.500px; }
.filters .st { margin: -3px 0 0 8px; }
.filters .fu { margin: -3px 4px 0 11px; }
.filters b { font-weight: 500; margin-top: 2px; }
.az { margin-left: auto; color: #aaa; }
.dev { height: 243px; padding: 5px 0 0 10px; width: 309px; margin-bottom: 5px; font-size: 12px; font-weight: 500; }
.filters + .dev { height: 246px; margin-bottom: 2px; }
.warm { background: #faf2e6; }
.dev header { display: flex; height: 32px; align-items: center; position: relative; }
.cb { width: 32px; height: 32px; border-radius: 4px; display: grid; place-items: center; color: #fff; }
.purple { background: #6b2c91; }
.dark { background: #1c262b; }
.ck { margin: 3px 0 0 8px; }
.nv { margin: -2px 5px 0 5px; color: #5b5bd6; }
.dev header b { font-weight: 500; margin-top: 2px; letter-spacing: .05px; }
.age { font-style: normal; background: #dedede; margin: 2px 6px 0 auto; padding: 0 6px; line-height: 17px; font-size: 12px; color: #111; }
.blue { background: #e3e7ee; }
.pw { color: #b5b5b5; margin: -1px 11px 0 0; }
.sig { margin: -2px 16px 0 0; }
.dev .last { margin-right: 16px; }
.dots { margin: -2px 6px 0 0; fill: #111; }
.dev li { height: 26px; display: flex; align-items: center; letter-spacing: .05px; }
.dev li svg { width: 15px; color: #929292; margin: -4px 20px 0 0; }
.dev .ad { height: 44px; line-height: 18px; align-items: flex-start; padding-top: 4px; width: 285px; }
.dev .ad svg { width: 11px; margin: 0 24px 0 0; }
.dev footer { display: flex; margin-top: 8px; height: 24px; border: 1px solid #bbb; background: #fff; font-size: 14px; font-weight: 400; width: 299px; color: #505050; overflow: hidden; }
.dev footer span { display: flex; flex: none; align-items: center; gap: 10px; padding-left: 14px; width: 99px; line-height: 20px; white-space: nowrap; }
.dev footer span + span { border-left: 1px solid #bbb; width: 127px; padding-left: 13px; gap: 7px; }
.dev footer span:last-child { width: 84px; padding-left: 14px; gap: 9px; }
.dev footer svg { color: #1a1a1a; }

/* map */
.main { position: relative; width: 1400px; height: 947px; display: flex; flex-direction: column; }
.map { width: 1400px; height: 907px; }
.map text { font-family: Roboto, sans-serif; }
.road text { font-size: 13px; fill: #6e3d0c; }
.rd2 text { font-size: 12px; fill: #55595d; }
.rd3 text { font-size: 10px; fill: #74787c; }
.poi text { font-size: 14px; }
.poi .bold text { font-weight: 500; }
.poi .area text { font-size: 14px; font-weight: 500; letter-spacing: 4.200px; fill: #70757a; }
.gray { fill: #56646c; }
.blue text { fill: #2468cf; }
.brown { fill: #c5680f; }
.shield text { fill: #fff; font-size: 11px; }
.shield .s text { font-size: 9px; font-weight: 700; }
.top { position: absolute; left: 7px; top: 11px; display: flex; gap: 11px; }
.ibox { width: 26px; height: 26px; background: #fff; text-align: center; font: 500 14px/27px Roboto, sans-serif; box-shadow: 0 1px 4px rgba(0,0,0,.3); }
.legend { width: 791px; height: 27px; background: rgba(255,255,255,.85); box-shadow: 0 1px 5px rgba(0,0,0,.4); display: flex; justify-content: space-between; align-items: center; padding: 0 12px 2px 11px; font-size: 12px; font-weight: 500; color: #666676; }
.legend span { display: flex; align-items: center; }
.legend i { width: 10px; height: 10px; border-radius: 5px; margin-right: 7px; }
.d1 { background: #28a745; } .d2 { background: #f00000; } .d3 { background: #f5a300; } .d4 { background: #6b2c91; }
.d5 { background: #1c2526; } .d6 { background: #9c9c9c; } .d7 { background: #5a1a0a; } .d8 { background: #cacaca; }
.info { position: absolute; left: 1132px; top: 11px; width: 258px; height: 694px; background: #fafafa; box-shadow: 0 1px 5px rgba(0,0,0,.45); padding: 0 5px 0 4px; font-size: 12px; font-weight: 500; border-radius: 2px; color: #333; }
.info h3 { height: 38px; display: flex; align-items: center; font-size: 13px; font-weight: 500; padding: 0 6px 5px 16px; }
.info h3 svg { margin: 3px 27px 0 auto; }
.info h3 svg + svg { margin: 3px 0 0; }
.tools { height: 26px; border: 1px solid #d4d4d4; display: flex; align-items: center; justify-content: space-around; color: #222; }
.card { border: 1px solid #d4d4d4; margin-top: 9px; }
.first { height: 321px; margin-top: 8px; }
.card h4 { font-size: 12px; font-weight: 500; height: 31px; display: flex; align-items: center; border-bottom: 1px solid #d4d4d4; padding: 0 0 0 5px; color: #111; }
.first h4 i { width: 12px; height: 12px; border-radius: 6px; background: #6b2c91; margin-right: 5px; }
.first h4 svg { margin-left: 5px; }
.first ul { padding: 4px 0 0 6px; }
.first li { height: 22px; display: grid; grid-template-columns: 25px 1fr; align-items: center; letter-spacing: .05px; }
.first li svg { color: #929292; }
.first .two { height: 40px; line-height: 18px; padding-right: 20px; }
.first .pur { color: #7a2f9a; }
.kv { height: 128px; }
.kv dl { display: grid; grid-template-columns: 121px 1fr; padding: 4px 5px; line-height: 22px; letter-spacing: .05px; }
.kv dt { color: #959595; }
.drv { height: 150px; }
.drv dl { grid-template-columns: 118px 1fr; }
.attr { position: absolute; right: 4px; top: 892px; font-size: 11px; line-height: 14px; color: #333; background: rgba(255,255,255,.5); }
.attr a { color: #0078a8; }
.bar { height: 40px; background: #fff; display: flex; align-items: center; gap: 22px; padding: 0 11px 0 12px; border-top: 1px solid #ccc; color: #333; box-shadow: inset 1px 0 #ccc; }
.bar svg { width: 16px; height: 16px; }
.sp { flex: 1; }

.mask { position: absolute; inset: 0; background: rgba(0,0,0,.45); }

/* modal */
.modal { position: absolute; left: 510px; top: 55px; width: 900px; height: 818px; background: #fff; border-radius: 2px; box-shadow: 0 4px 14px rgba(0,0,0,.25); color: #4a4a4a; display: flex; flex-direction: column; }
.mhead { height: 39px; border-bottom: 1px solid #ececec; display: flex; justify-content: space-between; align-items: center; padding: 0 14px 1px 24px; font-size: 16px; }
.mbody { padding: 0 24px; flex: 1; }
.tabs { display: flex; gap: 32px; height: 46px; border-bottom: 1px solid #ececec; align-items: stretch; }
.tabs span { height: 46px; line-height: 45px; }
.tabs .cur { color: #f7941d; border-bottom: 2px solid #f7941d; }
h5 { display: flex; align-items: center; height: 28px; font-size: 13px; font-weight: 500; color: #303030; margin: 12px 0 2px 8px; }
h5::before { content: ""; width: 35px; height: 1px; background: #ececec; margin-right: 14px; }
h5::after { content: ""; flex: 1; height: 1px; background: #ececec; margin-left: 13px; }
.s1 { margin-top: 20px; }
.s2 { margin-bottom: 3px; }
.s2::before { width: 40px; margin-right: 13px; }
.s4 { margin-bottom: 4px; }
.s4::before { margin-right: 12px; }
.grid { display: grid; grid-template-columns: 418px 418px; column-gap: 16px; row-gap: 6px; }
.g4 { row-gap: 7px; }
.f { height: 56px; position: relative; }
.f label { display: flex; height: 24px; line-height: 24px; }
.in { height: 32px; border: 1px solid #d4d4d4; border-radius: 2px; padding: 0 11px; display: flex; align-items: center; }
.in svg { margin-left: auto; color: #bdbdbd; }
.ph { color: #bfbfbf; padding-right: 10px; }
.dis { background: #f4f4f4; }
.add { width: 24px; height: 24px; background: #f7941d; border: 0; border-radius: 2px; margin: -1px 0 0 auto; display: grid; place-items: center; }
.sw { display: block; width: 28px; height: 16px; border-radius: 8px; background: #bfbfbf; margin-top: 9px; padding: 2px; }
.sw::before { content: ""; display: block; width: 12px; height: 12px; border-radius: 6px; background: #fff; }
.sw.on { background: #f7941d; }
.sw.on::before { margin-left: 12px; }
.q { margin: 6px 0 0 5px; }
.mfoot { height: 50px; border-top: 1px solid #ececec; display: flex; justify-content: flex-end; gap: 6px; padding: 8px 24px; }
.save { width: 121px; height: 33px; background: #f7941d; border: 3px solid #465fe2; color: #fff; font-weight: 500; box-shadow: inset 0 1px 6px rgba(90,40,0,.65), 0 2px 4px rgba(0,0,0,.3); }
.close { width: 67px; height: 32px; background: #fff; border: 1px solid #d4d4d4; border-radius: 2px; color: #4a4a4a; }

/* step annotations */
.mark { position: absolute; border: 3px solid #465fe2; box-shadow: 0 2px 4px rgba(0,0,0,.35), inset 0 2px 4px rgba(0,0,0,.3); }
.m-tab { left: 581px; top: 95px; width: 100px; height: 50px; }
.m-cor { left: 520px; top: 572px; width: 85px; height: 63px; }
.m-info { left: 435px; top: 562px; width: 68px; height: 28px; border-color: #f3b226; }
.arrow { position: absolute; left: 570px; top: 135px; fill: none; stroke: #425df5; filter: drop-shadow(1px 2px 2px rgba(0,0,0,.4)); }
.num { position: absolute; width: 40px; height: 40px; border-radius: 2px; background: #4059ff; color: #fff; text-align: center; font: 29px/41px Roboto, sans-serif; box-shadow: 0 2px 5px rgba(0,0,0,.5); }
.n1 { left: 436px; top: 520px; background: #f7b10c; }
.n2 { left: 606px; top: 583px; }
.n3 { left: 1155px; top: 831px; width: 34px; height: 34px; font-size: 25px; line-height: 34px; }
```
